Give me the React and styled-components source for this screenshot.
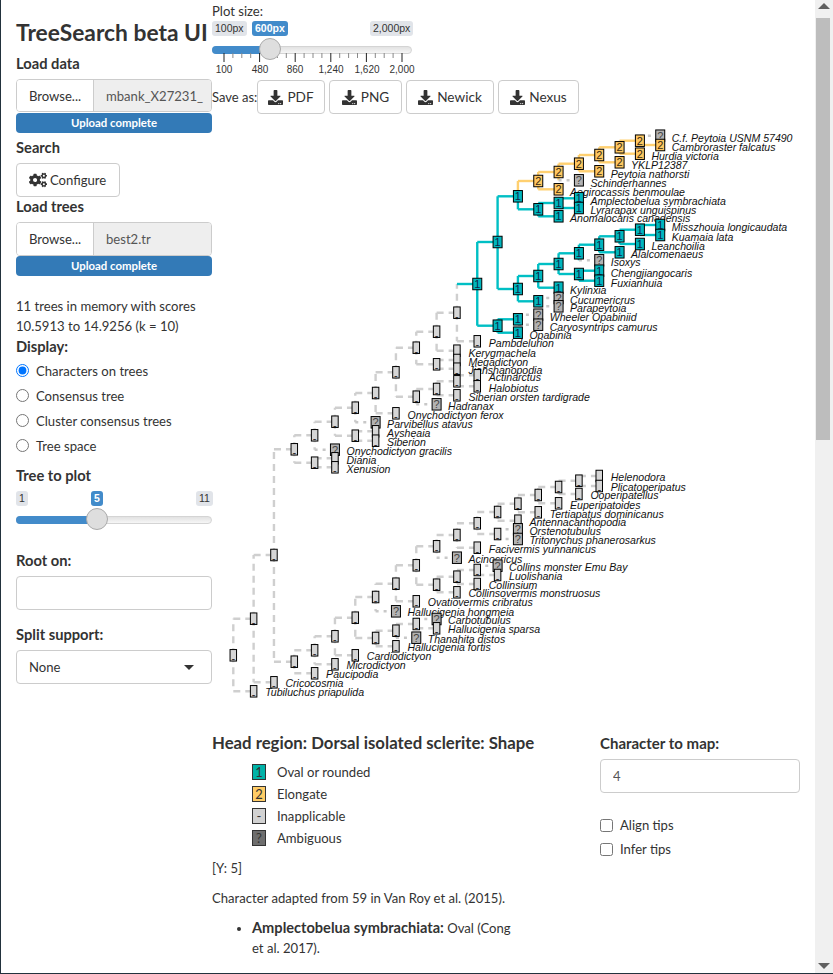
import React from 'react';
import styled, { createGlobalStyle } from 'styled-components';
import { FaDownload, FaCogs } from 'react-icons/fa';

const UI = `Lato, "Noto Sans", sans-serif`;
const ARIAL = `"Liberation Sans", Arial, sans-serif`;

const Global = createGlobalStyle`
  html, body { margin: 0; padding: 0; height: 974px; overflow: hidden; background: #fff; }
  body { font-family: ${UI}; font-size: 13.1px; line-height: 20px; color: #333; }
  * { box-sizing: border-box; }
`;

const Frame = styled.div`
  display: flex; width: 833px; height: 974px; overflow: hidden;
  border-left: 1px solid #22323d; border-bottom: 1px solid #22323d;
`;
const Page = styled.div`display: flex; flex: 1; min-width: 0; overflow: hidden;`;
const Sidebar = styled.aside`width: 196px; margin-left: 15px; flex: none; display: flex; flex-direction: column;`;
const Title = styled.h2`
  margin: 20px 0 0; font-size: 22.8px; line-height: 24px; font-weight: 700; white-space: nowrap; color: #333;
`;
const Label = styled.div`
  margin-top: ${p => p.$mt ?? 0}px; padding-bottom: 2px; font-size: 14.7px; font-weight: 700; line-height: 18px; color: #333;
`;
const FileGroup = styled.div`
  display: flex; margin-top: 5px; height: ${p => p.$h}px; border: 1px solid #ccc; border-radius: 4px; overflow: hidden;
`;
const Browse = styled.div`width: 77px; flex: none; display: flex; align-items: center; justify-content: center; background: #fff; border-right: 1px solid #ccc;`;
const FileName = styled.div`flex: 1; background: #eee; padding-left: 12px; display: flex; align-items: center; white-space: nowrap; overflow: hidden; color: #555;`;
const Progress = styled.div`
  height: 20px; margin-top: ${p => p.$mt}px; background: #337ab7; border-radius: 4px;
  color: #fff; font-size: 11.4px; font-weight: 700; line-height: 20px; text-align: center;
`;
const Button = styled.button`
  display: inline-flex; align-items: center; gap: 3px; height: 34px; padding: 0 12px; background: #fff;
  border: 1px solid #ccc; border-radius: 4px; font: inherit; color: #333; white-space: nowrap;
`;
const ConfigButton = styled(Button)`margin-top: 5px; width: 104px; align-self: flex-start;`;
const Info = styled.p`margin: 20px 0 0;`;
const Options = styled.div`margin-top: 1px;`;
const Choice = styled.label`display: flex; align-items: center; height: ${p => p.$h || 25}px;`;
const Radio = styled.input`margin: 0 7px 0 0; width: 13px; height: 13px; flex: none;`;
const Check = styled.input`margin: 0 7px 0 0; width: 13px; height: 13px; flex: none;`;
const TextInput = styled.input`
  display: block; width: ${p => p.$w}; height: 34px; margin-top: 5px; padding: 0 12px; border: 1px solid #ccc; border-radius: 4px;
  font: inherit; color: #555; background: #fff; outline: none;
`;
const Select = styled.div`
  position: relative; height: 34px; margin-top: 5px; padding: 0 12px; border: 1px solid #ccc; border-radius: 4px;
  display: flex; align-items: center; background: #fff;
  &::after {
    content: ''; position: absolute; right: 17px; top: 14px; border: 5px solid transparent; border-top-color: #333; border-bottom: 0;
  }
`;

const SliderBox = styled.div`position: relative; height: ${p => p.$h}px; width: 200px; font-family: ${ARIAL};`;
const SmallSliderBox = styled(SliderBox)`width: 196px;`;
const Tag = styled.span`
  position: absolute; top: ${p => p.$top}px; left: ${p => p.$x}px; height: 15px; padding: 0 ${p => p.$pad ?? 3}px; border-radius: 3px;
  font-size: 10.5px; line-height: 15px; white-space: nowrap;
  background: ${p => p.$on ? '#428bca' : '#e1e4e9'}; color: ${p => p.$on ? '#fff' : '#333'}; font-weight: ${p => p.$on ? 700 : 400};
`;
const Track = styled.div`
  position: absolute; left: 0; right: 0; top: ${p => p.$top}px; height: 8px; border-radius: 4px; border: 1px solid #d4d4d4;
  background: linear-gradient(#e2e2e2, #f6f6f6);
`;
const Fill = styled.div`
  position: absolute; left: 0; top: ${p => p.$top}px; height: 8px; border-radius: 4px 0 0 4px; background: #428bca;
`;
const Handle = styled.div`
  position: absolute; top: ${p => p.$top}px; width: 22px; height: 22px; margin-left: -11px; border-radius: 50%;
  background: #dedede; border: 1px solid #aaa;
`;
const Ticks = styled.svg`position: absolute; left: 0; top: 31px; display: block;`;
const TickText = styled.span`
  position: absolute; top: 41px; width: 40px; margin-left: -20px; font-size: 10px; line-height: 16px; text-align: center; color: #333;
`;

const Main = styled.main`width: 604px; flex: none; display: flex; flex-direction: column;`;
const PlotLabel = styled.div`padding-top: 1px; line-height: 20px; height: 21px;`;
const SaveRow = styled.div`display: flex; align-items: center; gap: 4px; height: 34px; margin-top: 0;`;
const SaveLabel = styled.span`width: 41px; white-space: nowrap; font-size: 13px;`;
const SaveButton = styled(Button)`width: ${p => p.$w}px; justify-content: center; font-size: 13.6px; padding: 0; gap: 4px;`;
const PlotSvg = styled.svg`display: block; flex: none; margin-top: 10px;`;

const Bottom = styled.div`display: flex; flex: 1; min-height: 0;`;
const Notes = styled.div`width: 322px; flex: none;`;
const Heading = styled.h4`margin: 9px 0 0; font-size: 16.75px; line-height: 20px; font-weight: 700; white-space: nowrap; color: #333;`;
const Legend = styled.ul`list-style: none; margin: 8px 0 0; padding: 0 0 0 40px;`;
const LegendRow = styled.li`display: flex; align-items: center; height: 22px; gap: 11px; white-space: nowrap;`;
const Swatch = styled.span`
  width: 14px; height: 16px; flex: none; border: 1px solid #333; background: ${p => p.$bg}; color: ${p => p.$fg || '#333'};
  font-size: 13px; line-height: 14px; text-align: center;
`;
const Para = styled.p`margin: ${p => p.$mt}px 0 0; line-height: 20px;`;
const Bullets = styled.ul`
  margin: 10px 0 0; padding: 0 0 0 40px; line-height: 20px; width: 308px;
  strong { font-size: 14.6px; }
`;
const Controls = styled.div`width: 200px; margin-left: 66px; flex: none;`;
const ControlLabel = styled(Label)`font-size: 15px;`;
const Checks = styled.div`margin-top: 20px;`;

const Scrollbar = styled.div`
  width: 18px; flex: none; background: #f0f0f0; position: relative;
  &::before, &::after { content: ''; position: absolute; left: 3px; border: 6px solid transparent; }
  &::before { top: 3px; border-bottom: 6px solid #606060; border-top: 0; }
  &::after { bottom: 4px; border-top: 6px solid #606060; border-bottom: 0; }
`;
const Thumb = styled.div`position: absolute; left: 1px; top: 18px; width: 14px; height: 422px; background: #bdbdbd;`;

/* Tree data: T = tip, N = internal node; x follows from depth */
const T = (s, y, label) => ({ s, y, label });
const N = (s, y, kids) => ({ s, y, kids });
const g = '-', q = '?', a = '1', b = '2';

const arthropods = N(a, 285, [
  N(a, 243, [
    N(a, 197.3, [
      N(b, 182, [
        N(b, 173, [
          N(b, 164.7, [
            N(b, 156, [
              N(b, 148.3, [
                N(b, 141.7, [T(q, 136.7, 'C.f. Peytoia USNM 57490'), T(b, 146, 'Cambroraster falcatus')]),
                T(b, 154.7, 'Hurdia victoria'),
              ]),
              T(b, 163.3, 'YKLP12387'),
            ]),
            T(b, 172.3, 'Peytoia nathorsti'),
          ]),
          T(q, 181.3, 'Schinderhannes'),
        ]),
        T(b, 190.3, 'Aegirocassis benmoulae'),
      ]),
      N(a, 210.3, [
        N(a, 204, [T(a, 199.3, 'Amplectobelua symbrachiata'), T(a, 209, 'Lyrarapax unguispinus')]),
        T(a, 217.3, 'Anomalocaris canadensis'),
      ]),
    ]),
    N(a, 290, [
      N(a, 277, [
        N(a, 265, [
          N(a, 254.3, [
            N(a, 245.7, [
              N(a, 237.3, [
                N(a, 230.7, [T(a, 226, 'Misszhouia longicaudata'), T(a, 236, 'Kuamaia lata')]),
                T(a, 245, 'Leanchoilia'),
              ]),
              T(a, 253.3, 'Alalcomenaeus'),
            ]),
            T(q, 261.3, 'Isoxys'),
          ]),
          N(a, 275, [T(a, 271.7, 'Chengjiangocaris'), T(a, 281.7, 'Fuxianhuia')]),
        ]),
        T(a, 288.7, 'Kylinxia'),
      ]),
      N(a, 302.3, [T(q, 299, 'Cucumericrus'), T(q, 307.3, 'Parapeytoia')]),
    ]),
  ]),
  N(a, 326.7, [
    N(a, 320.3, [T(q, 315.7, 'Wheeler Opabiniid'), T(q, 325.7, 'Caryosyntrips camurus')]),
    T(a, 333.7, 'Opabinia'),
  ]),
]);

const upper = N(g, 450.3, [
  N(g, 436.3, [
    N(g, 422.7, [
      N(g, 408.7, [
        N(g, 394, [
          N(g, 373.3, [
            N(g, 348.7, [
              N(g, 332.7, [
                N(g, 313.7, [arthropods, T(g, 342.3, 'Pambdelurion')]),
                T(g, 351.7, 'Kerygmachela'),
              ]),
              N(g, 365.3, [T(g, 361, 'Megadictyon'), T(g, 369.7, 'Jianshanopodia')]),
            ]),
            N(g, 397.7, [
              N(g, 390, [
                N(g, 382.3, [T(g, 376.3, 'Actinarctus'), T(g, 387.3, 'Halobiotus')]),
                T(g, 396.3, 'Siberian orsten tardigrade'),
              ]),
              T(q, 405.3, 'Hadranax'),
            ]),
          ]),
          T(g, 414.3, 'Onychodictyon ferox'),
        ]),
        T(q, 423.3, 'Parvibellus atavus'),
      ]),
      N(g, 436.7, [T(g, 432.3, 'Aysheaia'), T(g, 441.7, 'Siberion')]),
    ]),
    T(q, 450.7, 'Onychodictyon gracilis'),
  ]),
  N(g, 463.7, [T(g, 459.3, 'Diania'), T(g, 468.3, 'Xenusion')]),
]);

const lower = N(g, 662.7, [
  N(g, 651.3, [
    N(g, 637.3, [
      N(g, 618.7, [
        N(g, 598, [
          N(g, 584.7, [
            N(g, 566.3, [
              N(g, 547.3, [
                N(g, 536, [
                  N(g, 524.3, [
                    N(g, 513, [
                      N(g, 504.7, [
                        N(g, 496, [
                          N(g, 488, [
                            N(g, 481.7, [T(g, 477, 'Helenodora'), T(g, 487, 'Plicatoperipatus')]),
                            T(g, 495, 'Ooperipatellus'),
                          ]),
                          T(g, 504.3, 'Euperipatoides'),
                        ]),
                        T(g, 513.3, 'Tertiapatus dominicanus'),
                      ]),
                      T(g, 521.7, 'Antennacanthopodia'),
                    ]),
                    N(g, 535, [T(q, 530.3, 'Orstenotubulus'), T(q, 540, 'Tritonychus phanerosarkus')]),
                  ]),
                  T(g, 548.7, 'Facivermis yunnanicus'),
                ]),
                T(q, 558.7, 'Acinocricus'),
              ]),
              N(g, 585.7, [
                N(g, 577.7, [
                  N(g, 571, [T(q, 566.7, 'Collins monster Emu Bay'), T(g, 576, 'Luolishania')]),
                  T(g, 585, 'Collinsium'),
                ]),
                T(g, 593.3, 'Collinsovermis monstruosus'),
              ]),
            ]),
            T(g, 602.3, 'Ovatiovermis cribratus'),
          ]),
          T(q, 612.3, 'Hallucigenia hongmeia'),
        ]),
        N(g, 639, [
          N(g, 631.7, [
            N(g, 625, [T(q, 620, 'Carbotubulus'), T(g, 629.3, 'Hallucigenia sparsa')]),
            T(q, 638.7, 'Thanahita distos'),
          ]),
          T(g, 647.3, 'Hallucigenia fortis'),
        ]),
      ]),
      T(g, 656.3, 'Cardiodictyon'),
    ]),
    T(g, 665.3, 'Microdictyon'),
  ]),
  T(g, 674.3, 'Paucipodia'),
]);

const tree = N(g, 656.3, [
  N(g, 619.7, [N(g, 556, [upper, lower]), T(g, 683.3, 'Cricocosmia')]),
  T(g, 692.3, 'Tubiluchus priapulida'),
]);

const X0 = 233.3, DX = 20.33;
const STATE = {
  '1': { line: '#00bfc4', box: '#00b6bd', ink: '#10264a', w: 9 },
  '2': { line: '#ffd070', box: '#ffc861', ink: '#3a2a10', w: 9 },
  '-': { line: '#cfcfcf', box: '#d6d6d6', ink: '#222', w: 6.5, dash: '7 5' },
  '?': { line: '#c8c8c8', box: '#b2b2b2', ink: '#444', w: 9, dash: '3 5' },
};

function flatten(node, depth, parent, edges, nodes) {
  const x = X0 + depth * DX;
  nodes.push({ ...node, x });
  if (parent) {
    const coloured = s => s === '1' || s === '2';
    const vert = coloured(node.s) && coloured(parent.s) ? node.s : parent.s;
    edges.push({ kind: 'v', state: vert, x1: parent.x, y1: parent.y, x2: parent.x, y2: node.y });
    edges.push({ kind: 'h', state: node.s, x1: parent.x, y1: node.y, x2: x, y2: node.y });
  }
  (node.kids || []).forEach(k => flatten(k, depth + 1, { x, y: node.y, s: node.s }, edges, nodes));
}
const edges = [], nodes = [];
flatten(tree, 0, null, edges, nodes);

const labelY = y => y + 4.9 + ((692 - y) / 550) * 1.5;

const TreePlot = () => (
  <PlotSvg width="604" height="600" viewBox="212 125 604 600">
    {edges.map((e, i) => (
      <line key={i} x1={e.x1} y1={e.y1} x2={e.x2} y2={e.y2}
        stroke={STATE[e.state].line} strokeWidth="2.4"
        strokeDasharray={STATE[e.state].dash} />
    ))}
    {nodes.filter(n => n.label).map(n => (
      <text key={n.label} x={n.x + 11.5} y={labelY(n.y)} fontFamily={ARIAL} fontStyle="italic" fontSize="10.55" fill="#111">
        {n.label}
      </text>
    ))}
    {nodes.map((n, i) => {
      const st = STATE[n.s];
      return (
        <g key={i}>
          <rect x={n.x - st.w / 2} y={n.y - 5.75} width={st.w} height="11.5" fill={st.box} stroke="#000" strokeWidth="1" />
          <text x={n.x} y={n.s === '-' ? n.y + 7 : n.y + 4} textAnchor="middle" fontFamily={ARIAL} fontSize="11" fill={st.ink}>
            {n.s}
          </text>
        </g>
      );
    })}
  </PlotSvg>
);

const SizeTicks = () => {
  const lines = [];
  for (let i = 0; i <= 20; i++) {
    const x = 12 + i * 8.9;
    const major = i % 4 === 0;
    lines.push(<line key={i} x1={x} x2={x} y1="1" y2={major ? 10 : 6} stroke={major ? '#222' : '#888'} strokeWidth="1" />);
  }
  return <Ticks width="200" height="12">{lines}</Ticks>;
};

const FileRow = ({ name, h }) => (
  <FileGroup $h={h}><Browse>Browse...</Browse><FileName>{name}</FileName></FileGroup>
);

export default function App() {
  return (
    <>
      <Global />
      <Frame>
        <Page>
          <Sidebar>
            <Title>TreeSearch beta UI</Title>
            <Label $mt={10}>Load data</Label>
            <FileRow name="mbank_X27231_" h={33} />
            <Progress $mt={1}>Upload complete</Progress>
            <Label $mt={5}>Search</Label>
            <ConfigButton><FaCogs size={18} />Configure</ConfigButton>
            <Label>Load trees</Label>
            <FileRow name="best2.tr" h={34} />
            <Progress $mt={0}>Upload complete</Progress>
            <Info>11 trees in memory with scores<br />10.5913 to 14.9256 (k = 10)</Info>
            <Label $mt={1}>Display:</Label>
            <Options>
              <Choice><Radio type="radio" name="d" defaultChecked />Characters on trees</Choice>
              <Choice><Radio type="radio" name="d" />Consensus tree</Choice>
              <Choice><Radio type="radio" name="d" />Cluster consensus trees</Choice>
              <Choice><Radio type="radio" name="d" />Tree space</Choice>
            </Options>
            <Label $mt={8}>Tree to plot</Label>
            <SmallSliderBox $h={44}>
              <Tag $top={5} $x={0}>1</Tag>
              <Tag $top={5} $x={75} $on>5</Tag>
              <Tag $top={5} $x={180}>11</Tag>
              <Track $top={30} />
              <Fill $top={30} style={{ width: 81 }} />
              <Handle $top={22} style={{ left: 81 }} />
            </SmallSliderBox>
            <Label $mt={21}>Root on:</Label>
            <TextInput $w="100%" />
            <Label $mt={15}>Split support:</Label>
            <Select>None</Select>
          </Sidebar>
          <Main>
            <PlotLabel>Plot size:</PlotLabel>
            <SliderBox $h={59}>
              <Tag $top={0} $x={0} $pad={3}>100px</Tag>
              <Tag $top={0} $x={40} $on $pad={3}>600px</Tag>
              <Tag $top={0} $x={158} $pad={3}>2,000px</Tag>
              <Track $top={25} />
              <Fill $top={25} style={{ width: 58 }} />
              <SizeTicks />
              <Handle $top={17} style={{ left: 58 }} />
              {[['100', 12], ['480', 48], ['860', 83], ['1,240', 119], ['1,620', 155], ['2,000', 190]].map(([t, x]) => (
                <TickText key={t} style={{ left: x }}>{t}</TickText>
              ))}
            </SliderBox>
            <SaveRow>
              <SaveLabel>Save as:</SaveLabel>
              <SaveButton $w={68}><FaDownload size={15} />PDF</SaveButton>
              <SaveButton $w={73}><FaDownload size={15} />PNG</SaveButton>
              <SaveButton $w={88}><FaDownload size={15} />Newick</SaveButton>
              <SaveButton $w={81}><FaDownload size={15} />Nexus</SaveButton>
            </SaveRow>
            <TreePlot />
            <Bottom>
              <Notes>
                <Heading>Head region: Dorsal isolated sclerite: Shape</Heading>
                <Legend>
                  <LegendRow><Swatch $bg="#00b3a8">1</Swatch>Oval or rounded</LegendRow>
                  <LegendRow><Swatch $bg="#ffcc66">2</Swatch>Elongate</LegendRow>
                  <LegendRow><Swatch $bg="#d2d2d2">-</Swatch>Inapplicable</LegendRow>
                  <LegendRow><Swatch $bg="#6e6e6e">?</Swatch>Ambiguous</LegendRow>
                </Legend>
                <Para $mt={9}>[Y: 5]</Para>
                <Para $mt={10}>Character adapted from 59 in Van Roy et al. (2015).</Para>
                <Bullets>
                  <li><strong>Amplectobelua symbrachiata:</strong> Oval (Cong et al. 2017).</li>
                </Bullets>
              </Notes>
              <Controls>
                <ControlLabel $mt={10}>Character to map:</ControlLabel>
                <TextInput $w="200px" defaultValue="4" />
                <Checks>
                  <Choice $h={24}><Check type="checkbox" />Align tips</Choice>
                  <Choice $h={24}><Check type="checkbox" />Infer tips</Choice>
                </Checks>
              </Controls>
            </Bottom>
          </Main>
        </Page>
        <Scrollbar><Thumb /></Scrollbar>
      </Frame>
    </>
  );
}
